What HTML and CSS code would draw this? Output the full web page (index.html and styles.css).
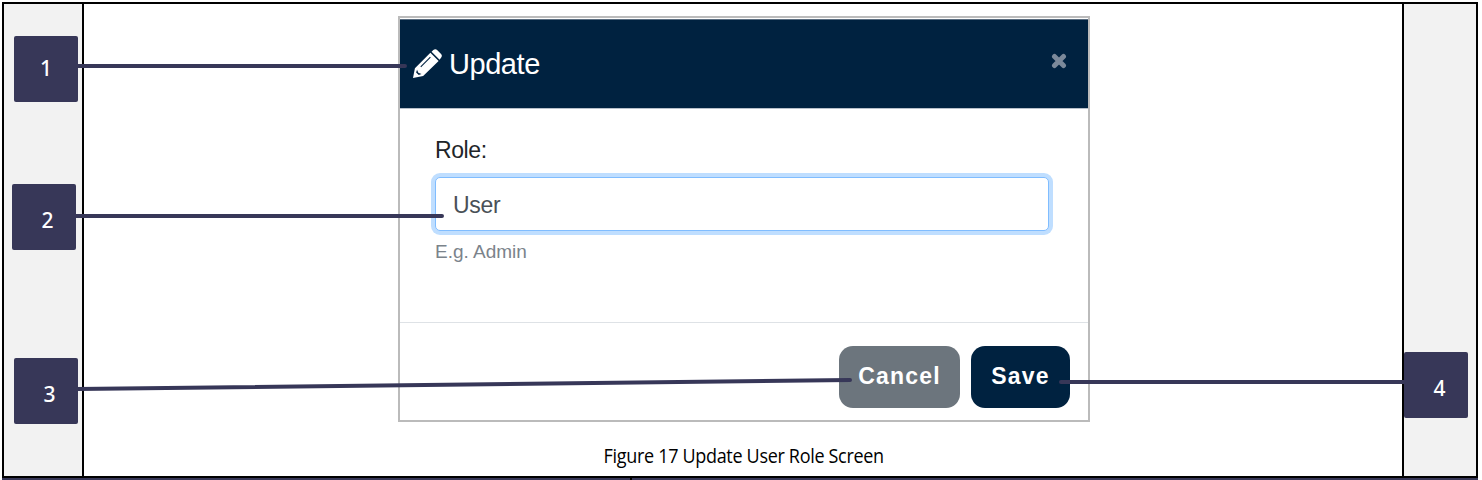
FILE: index.html
```html
<!DOCTYPE html>
<html lang="en">
<head>
<meta charset="utf-8">
<title>Update User Role</title>
<link rel="stylesheet" href="styles.css">
</head>
<body>
<main class="page">
  <div class="figure-row">
    <aside class="margin-cell"></aside>
    <figure class="figure">
      <section class="modal">
        <header class="modal-header">
          <svg class="pencil" viewBox="0 0 30 30"><path fill="#fff" d="M0 30 2 20 18 4 26.500 12.500 10.500 28ZM19.200 2.900 21 1Q23.200-.8 25.200 1.200L28.800 4.800Q30.800 6.800 29 9L27.500 11.200Z"/><path fill="none" stroke="#002240" stroke-width="1.100" d="m8 18.500 10-10"/><path fill="#002240" d="m4.200 21.500 1.300 3 3.300 1.300-2.800 1.200-2.800-2.800Z"/></svg>
          <h1 class="modal-title">Update</h1>
          <svg class="close" viewBox="0 0 16 18"><path d="m3.500 4.500 9 9m0-9-9 9"/></svg>
        </header>
        <div class="modal-body">
          <label class="label" for="role">Role:</label>
          <input class="field" id="role" type="text" value="User">
          <small class="hint">E.g. Admin</small>
        </div>
        <footer class="modal-footer">
          <button class="button cancel">Cancel</button>
          <button class="button save">Save</button>
        </footer>
      </section>
      <figcaption class="caption"><span class="caption-text">Figure 17 Update User Role Screen</span></figcaption>
    </figure>
    <aside class="margin-cell"></aside>
  </div>
  <div class="next-row"><div class="next-cell"></div></div>
  <svg class="connectors" viewBox="0 0 1482 480">
    <path d="M77 66H405M75 216H442M77 389 850 380M1061 382H1405"/>
  </svg>
  <div class="callout one"><span>1</span></div>
  <div class="callout two"><span>2</span></div>
  <div class="callout three"><span>3</span></div>
  <div class="callout four"><span>4</span></div>
</main>
</body>
</html>
```
FILE: styles.css
```css
* { box-sizing: border-box; }
body { margin: 0; background: #fff; overflow: hidden; }
.page {
  position: relative;
  width: 1482px;
  height: 480px;
  padding: 2px 4px 0 2px;
}
.figure-row {
  display: grid;
  grid-template-columns: 78px 1318px 72px;
  gap: 2px;
  width: 1476px;
  height: 476px;
  padding: 2px;
  background: #000;
}
.margin-cell { background: #f2f2f2; }
.figure {
  display: flex;
  flex-direction: column;
  align-items: center;
  margin: 0;
  padding: 12px 0 0 2px;
  background: #fff;
}
.modal {
  display: flex;
  flex-direction: column;
  width: 692px;
  height: 406px;
  border: 2px solid #bbb;
  padding-top: 1px;
  background: #fff;
  font-family: "Liberation Sans", Arial, sans-serif;
}
.modal-header {
  display: flex;
  align-items: flex-start;
  height: 90px;
  padding: 30px 21px 0 13px;
  background: #002240;
  border-top: 1px solid #596c7f;
  border-bottom: 1px solid #b7c0ca;
}
.pencil { width: 29px; height: 29px; margin-top: -1px; }
.modal-title {
  margin: -2px 0 0 7px;
  font-size: 29px;
  line-height: 32px;
  font-weight: 400;
  letter-spacing: -.45px;
  color: #fff;
}
.close {
  width: 16px;
  height: 18px;
  margin: 2px 0 0 auto;
  fill: none;
  stroke: #7b899a;
  stroke-width: 5;
  stroke-linecap: round;
}
.modal-body {
  display: flex;
  flex-direction: column;
  height: 213px;
  padding: 26px 39px 0 35px;
}
.label {
  font-size: 23px;
  line-height: 30px;
  letter-spacing: -.4px;
  color: #212529;
}
.field {
  width: 614px;
  height: 54px;
  margin-top: 12px;
  padding: 2px 17px 0;
  border: 1px solid #80bdff;
  border-radius: 5px;
  box-shadow: 0 0 0 4px #bfdeff;
  outline: none;
  font: 23px "Liberation Sans", Arial, sans-serif;
  letter-spacing: -.3px;
  color: #495057;
}
.hint {
  margin-top: 8px;
  font-size: 19px;
  line-height: 26px;
  color: #7b838b;
}
.modal-footer {
  display: flex;
  flex: 1;
  justify-content: flex-end;
  gap: 11px;
  padding: 23px 18px 0 0;
  border-top: 1px solid #dee2e6;
}
.button {
  height: 62px;
  padding: 0 0 2px;
  border: 0;
  border-radius: 14px;
  color: #fff;
  font: bold 23px "Liberation Sans", Arial, sans-serif;
  letter-spacing: 1.2px;
}
.cancel { width: 121px; background: #6c757d; }
.save { width: 99px; background: #002240; }
.caption {
  padding-top: 20px;
  font-family: "Open Sans", "Noto Sans", sans-serif;
  font-size: 20px;
  line-height: 27px;
  letter-spacing: -.35px;
  color: #000;
}
.caption-text { display: inline-block; transform: scaleX(.9); }
.next-row { width: 1476px; height: 2px; background: #373758; }
.next-cell { width: 630px; height: 2px; border-right: 2px solid #000; }
.connectors {
  position: absolute;
  inset: 0;
  width: 1482px;
  height: 480px;
  fill: none;
  stroke: #373758;
  stroke-width: 4;
  stroke-linecap: round;
}
.callout {
  position: absolute;
  display: flex;
  justify-content: center;
  width: 64px;
  height: 66px;
  padding-top: 17px;
  border-radius: 2px;
  background: #373758;
  color: #fff;
  font: 500 21px/30px "Noto Sans", sans-serif;
}
.one { left: 14px; top: 36px; }
.two { left: 12px; top: 184px; padding: 21px 0 0 7px; }
.three { left: 14px; top: 358px; padding: 21px 0 0 7px; }
.four { left: 1404px; top: 352px; padding: 21px 0 0 7px; }
```
